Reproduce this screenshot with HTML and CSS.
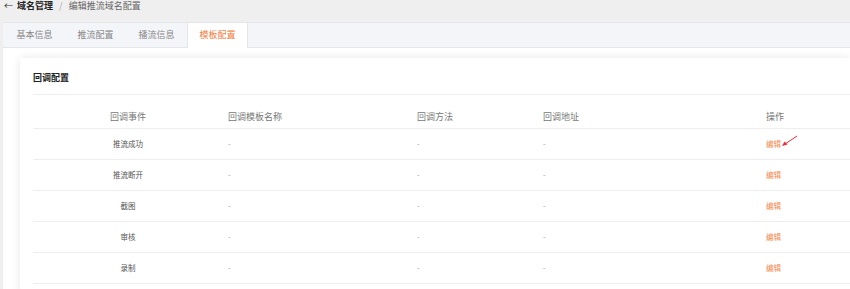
FILE: index.html
```html
<!DOCTYPE html>
<html lang="zh-CN">

<head>
    <meta charset="UTF-8">
    <meta name="viewport" content="width=device-width, initial-scale=1.0">
    <title>编辑推流域名配置</title>
    <link rel="stylesheet" href="styles.css">
</head>

<body>
    <!-- 面包屑 -->
    <div class="crumb">
        <span class="crumb-back">&larr;</span>
        <span class="crumb-parent">域名管理</span>
        <span class="crumb-sep">/</span>
        <span class="crumb-current">编辑推流域名配置</span>
    </div>
    <div class="panel">
        <!-- 标签栏 -->
        <div class="tabs">
            <div class="tab">基本信息</div>
            <div class="tab">推流配置</div>
            <div class="tab">播流信息</div>
            <div class="tab active">模板配置</div>
        </div>
        <div class="content">
            <div class="card">
                <div class="card-title">回调配置</div>
                <div class="grid">
                    <div class="row head">
                        <div class="cell center">回调事件</div>
                        <div class="cell">回调模板名称</div>
                        <div class="cell">回调方法</div>
                        <div class="cell">回调地址</div>
                        <div class="cell">操作</div>
                    </div>
                    <div class="row">
                        <div class="cell center">推流成功</div>
                        <div class="cell dash">-</div>
                        <div class="cell dash">-</div>
                        <div class="cell dash">-</div>
                        <div class="cell op">
                            <a href="javascript:;">编辑</a>
                            <svg class="arrow" width="20" height="14" viewBox="0 0 20 14">
                                <line x1="17" y1="2" x2="5" y2="10" stroke="#f2283b" stroke-width="1" />
                                <polygon points="2,12 4.5,7.5 7.5,10.5" fill="#f2283b" />
                            </svg>
                        </div>
                    </div>
                    <div class="row">
                        <div class="cell center">推流断开</div>
                        <div class="cell dash">-</div>
                        <div class="cell dash">-</div>
                        <div class="cell dash">-</div>
                        <div class="cell op"><a href="javascript:;">编辑</a></div>
                    </div>
                    <div class="row">
                        <div class="cell center">截图</div>
                        <div class="cell dash">-</div>
                        <div class="cell dash">-</div>
                        <div class="cell dash">-</div>
                        <div class="cell op"><a href="javascript:;">编辑</a></div>
                    </div>
                    <div class="row">
                        <div class="cell center">审核</div>
                        <div class="cell dash">-</div>
                        <div class="cell dash">-</div>
                        <div class="cell dash">-</div>
                        <div class="cell op"><a href="javascript:;">编辑</a></div>
                    </div>
                    <div class="row">
                        <div class="cell center">录制</div>
                        <div class="cell dash">-</div>
                        <div class="cell dash">-</div>
                        <div class="cell dash">-</div>
                        <div class="cell op"><a href="javascript:;">编辑</a></div>
                    </div>
                </div>
            </div>
        </div>
    </div>
</body>

</html>
```

FILE: styles.css
```css
body {
    margin: 0;
    background-color: #efefef;
    font-family: "Noto Sans CJK SC", "Noto Sans", sans-serif;
    overflow: hidden;
}

a {
    text-decoration: none;
}

.crumb {
    height: 22px;
    line-height: 12px;
    padding-left: 4px;
    font-size: 9px;
    color: #666;
}

.crumb-back {
    color: #333;
    margin-right: 2px;
}

.crumb-parent {
    color: #222;
    font-weight: bold;
}

.crumb-sep {
    color: #aaa;
    margin: 0 4px;
}

.panel {
    margin-left: 3px;
    background-color: #fff;
    height: 267px;
}

.tabs {
    display: flex;
    height: 24px;
    padding-left: 1px;
    background-color: #f4f5f9;
    border-top: 1px solid #e4e6ea;
    border-bottom: 1px solid #e4e6ea;
}

.tab {
    width: 61px;
    text-align: center;
    line-height: 24px;
    font-size: 9px;
    color: #888;
}

.tab.active {
    box-sizing: border-box;
    height: 25px;
    background-color: #fff;
    color: #f47c3c;
    border-left: 1px solid #e4e6ea;
    border-right: 1px solid #e4e6ea;
}

.content {
    padding: 10px 0 0 17px;
}

.card {
    background-color: #fff;
    padding-left: 13px;
    height: 240px;
    box-shadow: 0 0 9px rgba(0, 0, 0, .09);
}

.card-title {
    height: 36px;
    line-height: 40px;
    font-size: 9px;
    font-weight: bold;
    color: #222;
    border-bottom: 1px solid #eeeeee;
}

.row {
    display: grid;
    grid-template-columns: 190px 189px 126px 223px 1fr;
    height: 30px;
    line-height: 30px;
    border-bottom: 1px solid #eeeeee;
    font-size: 7.5px;
    color: #555;
}

.row.head {
    height: 23px;
    line-height: 23px;
    padding-top: 10px;
    font-size: 9px;
    color: #777;
}

.cell {
    padding-left: 5px;
}

.cell.center {
    padding-left: 0;
    text-align: center;
}

.cell.dash {
    color: #999;
}

.cell.op {
    position: relative;
}

.cell.op a {
    color: #f5884e;
}

.arrow {
    position: absolute;
    left: 19px;
    top: 5px;
}
```
